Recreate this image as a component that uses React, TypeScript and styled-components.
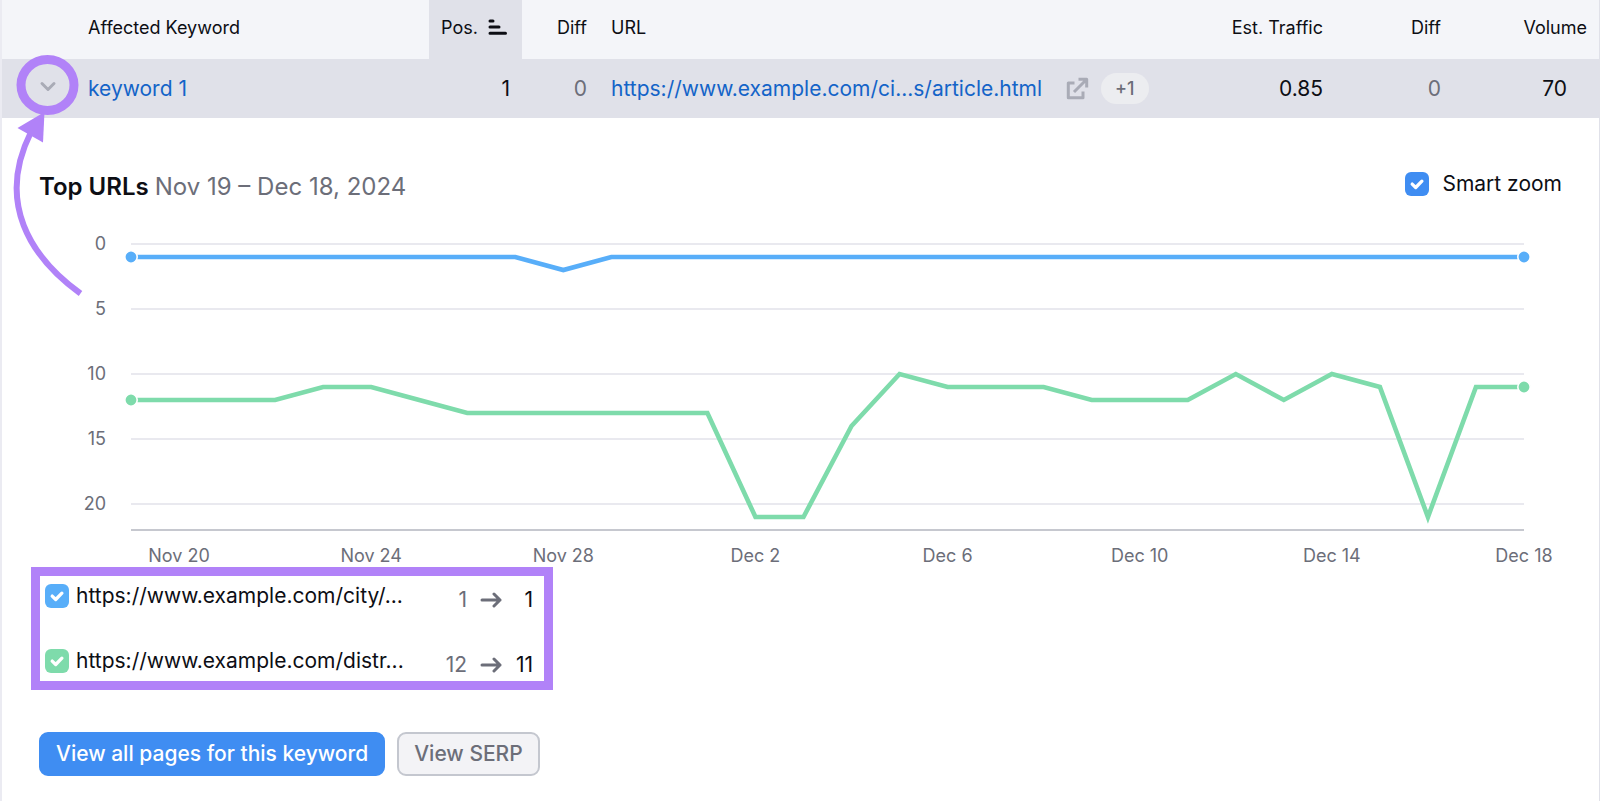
import React, { useEffect, useRef, useState } from "react";
import styled, { createGlobalStyle } from "styled-components";

const colors = {
  text: "#0d0e14",
  muted: "#6c6e79",
  link: "#1464c8",
  head: "#f4f5f9",
  row: "#e0e1e9",
  blue: "#3f8df2",
  series1: "#58aef9",
  series2: "#7edbab",
  mark: "#b182f8",
};

const GlobalStyle = createGlobalStyle`
  * { box-sizing: border-box; }
  body {
    margin: 0;
    background: #fff;
    color: ${colors.text};
    font-family: Inter, "Liberation Sans", sans-serif;
  }
`;

const Page = styled.main`
  position: relative;
  min-height: 100vh;
  border-left: 2px solid #ebebf2;
  border-right: 1px solid #e0e1e9;
`;

const Table = styled.table`
  width: 100%;
  table-layout: fixed;
  border-collapse: collapse;
`;

const HeadCell = styled.th<{ $right?: boolean; $active?: boolean }>`
  height: 59px;
  padding: 0 12px 4px;
  background: ${(p) => (p.$active ? colors.row : colors.head)};
  font-size: 18px;
  font-weight: 400;
  line-height: 24px;
  white-space: nowrap;
  text-align: ${(p) => (p.$right ? "right" : "left")};
`;

const Cell = styled.td<{ $right?: boolean; $muted?: boolean; $wide?: boolean }>`
  height: 59px;
  padding: 0 ${(p) => (p.$wide ? 32 : 12)}px 0 12px;
  background: ${colors.row};
  color: ${(p) => (p.$muted ? colors.muted : colors.text)};
  font-size: 21px;
  line-height: 28px;
  white-space: nowrap;
  text-align: ${(p) => (p.$right ? "right" : "left")};
`;

const SortLabel = styled.span`
  display: flex;
  align-items: center;
  justify-content: space-between;
  padding-right: 2px;
`;

const Toggle = styled.button`
  display: grid;
  place-items: center;
  width: 32px;
  height: 32px;
  margin: 0 0 0 auto;
  padding: 0 0 4px;
  border: 0;
  background: none;
`;

const Link = styled.a`
  color: ${colors.link};
  text-decoration: none;
`;

const UrlGroup = styled.div`
  display: flex;
  align-items: center;
`;

const IconLink = styled.a`
  display: flex;
  margin: 0 12px 0 24px;
`;

const Pill = styled.button`
  height: 31px;
  padding: 0 14px;
  border: 0;
  border-radius: 16px;
  background: #ecedf0;
  color: ${colors.muted};
  font: 500 18px/24px Inter, sans-serif;
`;

const Panel = styled.section`
  padding: 51px 37px 25px;
`;

const PanelHead = styled.header`
  display: flex;
  justify-content: space-between;
  align-items: flex-start;
  height: 36px;
`;

const Title = styled.h2`
  margin: 0;
  font-size: 24px;
  font-weight: 600;
  line-height: 36px;
`;

const Period = styled.span`
  color: ${colors.muted};
  font-weight: 400;
`;

const CheckLabel = styled.label<{ $gap: number }>`
  display: flex;
  align-items: center;
  gap: ${(p) => p.$gap}px;
  font-size: 21px;
  line-height: 30px;
`;

const CheckBox = styled.span`
  display: grid;
  place-items: center;
  flex: none;
  > * { grid-area: 1 / 1; }
  > svg { pointer-events: none; }
`;

const CheckInput = styled.input<{ $color: string }>`
  appearance: none;
  width: 24px;
  height: 24px;
  margin: 0;
  border-radius: 6px;
  background: ${(p) => p.$color};
`;

const ChartBox = styled.div`
  margin-top: 29px;
  height: 333px;
  svg { display: block; }
`;

const AxisText = styled.text`
  fill: ${colors.muted};
  font-size: 18px;
`;

const Legend = styled.ul`
  width: 522px;
  height: 123px;
  margin: 0 0 0 -8px;
  padding: 5px 11px 5px 5px;
  border: 9px solid ${colors.mark};
  display: flex;
  flex-direction: column;
  justify-content: space-between;
  list-style: none;
`;

const LegendRow = styled.li`
  display: flex;
  align-items: center;
  justify-content: space-between;
  height: 30px;
`;

const Change = styled.span`
  display: grid;
  grid-template-columns: 26px 22px 18px;
  column-gap: 13px;
  align-items: center;
  padding-top: 8px;
  text-align: right;
  font-size: 21px;
  line-height: 28px;
`;

const Before = styled.span`
  color: ${colors.muted};
`;

const Actions = styled.div`
  display: flex;
  gap: 12px;
  margin-top: 42px;
`;

const Button = styled.button<{ $primary?: boolean }>`
  height: 44px;
  padding: 0 15px;
  border: 2px solid ${(p) => (p.$primary ? colors.blue : "#c4c7cf")};
  border-radius: 9px;
  background: ${(p) => (p.$primary ? colors.blue : "#f3f3f6")};
  color: ${(p) => (p.$primary ? "#fff" : colors.muted)};
  font: 500 21px/28px Inter, sans-serif;
  white-space: nowrap;
`;

const Annotation = styled.svg`
  position: absolute;
  left: -2px;
  top: 0;
  pointer-events: none;
`;

function Check({ label, color, gap }: { label: string; color: string; gap: number }) {
  return (
    <CheckLabel $gap={gap}>
      <CheckBox>
        <CheckInput type="checkbox" defaultChecked $color={color} />
        <svg width="24" height="24" viewBox="0 0 24 24" fill="none" stroke="#fff" strokeWidth="3.3" strokeLinecap="round" strokeLinejoin="round">
          <path d="M7.2 12.1 10.7 15.5 16.9 9.2" />
        </svg>
      </CheckBox>
      {label}
    </CheckLabel>
  );
}

const series = [
  {
    color: colors.series1,
    values: [1, 1, 1, 1, 1, 1, 1, 1, 1, 2, 1, 1, 1, 1, 1, 1, 1, 1, 1, 1, 1, 1, 1, 1, 1, 1, 1, 1, 1, 1],
  },
  {
    color: colors.series2,
    values: [12, 12, 12, 12, 11, 11, 12, 13, 13, 13, 13, 13, 13, 21, 21, 14, 10, 11, 11, 11, 12, 12, 12, 10, 12, 10, 11, 21, 11, 11],
  },
];
const dates = ["Nov 20", "Nov 24", "Nov 28", "Dec 2", "Dec 6", "Dec 10", "Dec 14", "Dec 18"];

function Chart() {
  const box = useRef<HTMLDivElement>(null);
  const [width, setWidth] = useState(1200);
  useEffect(() => {
    const el = box.current!;
    const update = () => setWidth(el.clientWidth);
    update();
    const observer = new ResizeObserver(update);
    observer.observe(el);
    return () => observer.disconnect();
  }, []);
  const left = 92;
  const right = width - 38;
  const x = (i: number) => left + ((right - left) * i) / 29;
  const y = (v: number) => 10 + v * 13;
  return (
    <ChartBox ref={box}>
      <svg width={width} height="333" role="img" aria-label="Top URLs positions">
        {[0, 5, 10, 15, 20].map((v) => (
          <g key={v}>
            <line x1={left} x2={right} y1={y(v)} y2={y(v)} stroke="#e2e2ea" strokeWidth="1.6" />
            <AxisText x="67" y={y(v) + 6} textAnchor="end">{v}</AxisText>
          </g>
        ))}
        <line x1={left} x2={right} y1={y(22)} y2={y(22)} stroke="#c6c8cf" strokeWidth="1.8" />
        {dates.map((d, i) => (
          <AxisText key={d} x={x(1 + i * 4)} y="328" textAnchor="middle">{d}</AxisText>
        ))}
        {series.map((s) => (
          <g key={s.color}>
            <polyline
              points={s.values.map((v, i) => `${x(i)},${y(v)}`).join(" ")}
              fill="none"
              stroke={s.color}
              strokeWidth="4.6"
            />
            {[0, 29].map((i) => (
              <circle key={i} cx={x(i)} cy={y(s.values[i])} r="6.2" fill={s.color} stroke="#fff" strokeWidth="1.6" />
            ))}
          </g>
        ))}
      </svg>
    </ChartBox>
  );
}

const legend = [
  { url: "https://www.example.com/city/...", color: colors.series1, before: 1, after: 1 },
  { url: "https://www.example.com/distr...", color: colors.series2, before: 12, after: 11 },
];

export default function App() {
  return (
    <Page>
      <GlobalStyle />
      <Table>
        <colgroup>
          <col style={{ width: 74 }} />
          <col style={{ width: 353 }} />
          <col style={{ width: 93 }} />
          <col style={{ width: 77 }} />
          <col />
          <col style={{ width: 135 }} />
          <col style={{ width: 118 }} />
          <col style={{ width: 146 }} />
        </colgroup>
        <thead>
          <tr>
            <HeadCell />
            <HeadCell>Affected Keyword</HeadCell>
            <HeadCell $active>
              <SortLabel>
                Pos.
                <svg width="20" height="18" viewBox="0 0 20 18" stroke={colors.text} strokeWidth="3" strokeLinecap="round">
                  <path d="M2 2H5M2 8H11M2 14.2H17.5" />
                </svg>
              </SortLabel>
            </HeadCell>
            <HeadCell $right>Diff</HeadCell>
            <HeadCell>URL</HeadCell>
            <HeadCell $right>Est. Traffic</HeadCell>
            <HeadCell $right>Diff</HeadCell>
            <HeadCell $right>Volume</HeadCell>
          </tr>
        </thead>
        <tbody>
          <tr>
            <Cell>
              <Toggle aria-label="Collapse row">
                <svg width="18" height="12" viewBox="0 0 18 12" fill="none" stroke="#a9abb6" strokeWidth="3" strokeLinecap="round" strokeLinejoin="round">
                  <path d="M3 2.5 9 8.5 15 2.5" />
                </svg>
              </Toggle>
            </Cell>
            <Cell><Link href="#keyword">keyword 1</Link></Cell>
            <Cell $right>1</Cell>
            <Cell $right $muted>0</Cell>
            <Cell>
              <UrlGroup>
                <Link href="#article">https://www.example.com/ci...s/article.html</Link>
                <IconLink href="#open" aria-label="Open in new tab">
                  <svg width="23" height="23" viewBox="0 0 23 23" fill="none" stroke="#a9abb6" strokeWidth="3" strokeLinejoin="round">
                    <path d="M8.5 6H2.3V20.7H17V14.5M12.5 2.3H20.7V10.5M20 3 8 15" />
                  </svg>
                </IconLink>
                <Pill>+1</Pill>
              </UrlGroup>
            </Cell>
            <Cell $right>0.85</Cell>
            <Cell $right $muted>0</Cell>
            <Cell $right $wide>70</Cell>
          </tr>
        </tbody>
      </Table>
      <Panel>
        <PanelHead>
          <Title>Top URLs <Period>Nov 19 – Dec 18, 2024</Period></Title>
          <Check label="Smart zoom" color={colors.blue} gap={13} />
        </PanelHead>
        <Chart />
        <Legend>
          {legend.map((item) => (
            <LegendRow key={item.url}>
              <Check label={item.url} color={item.color} gap={7} />
              <Change>
                <Before>{item.before}</Before>
                <svg width="22" height="18" viewBox="0 0 22 18" fill="none" stroke={colors.muted} strokeWidth="3" strokeLinecap="round" strokeLinejoin="round">
                  <path d="M2 9H20M14 3 20 9 14 15" />
                </svg>
                <span>{item.after}</span>
              </Change>
            </LegendRow>
          ))}
        </Legend>
        <Actions>
          <Button $primary>View all pages for this keyword</Button>
          <Button>View SERP</Button>
        </Actions>
      </Panel>
      <Annotation width="100" height="310" viewBox="0 0 100 310" fill="none" stroke={colors.mark}>
        <ellipse cx="47.5" cy="85" rx="26.5" ry="25.5" strokeWidth="9" />
        <path d="M80.5 293.5C30 257 -4 202 31 132" strokeWidth="6" />
        <path d="M44.5 112 43 142.5 17.5 128Z" fill={colors.mark} stroke="none" />
      </Annotation>
    </Page>
  );
}
